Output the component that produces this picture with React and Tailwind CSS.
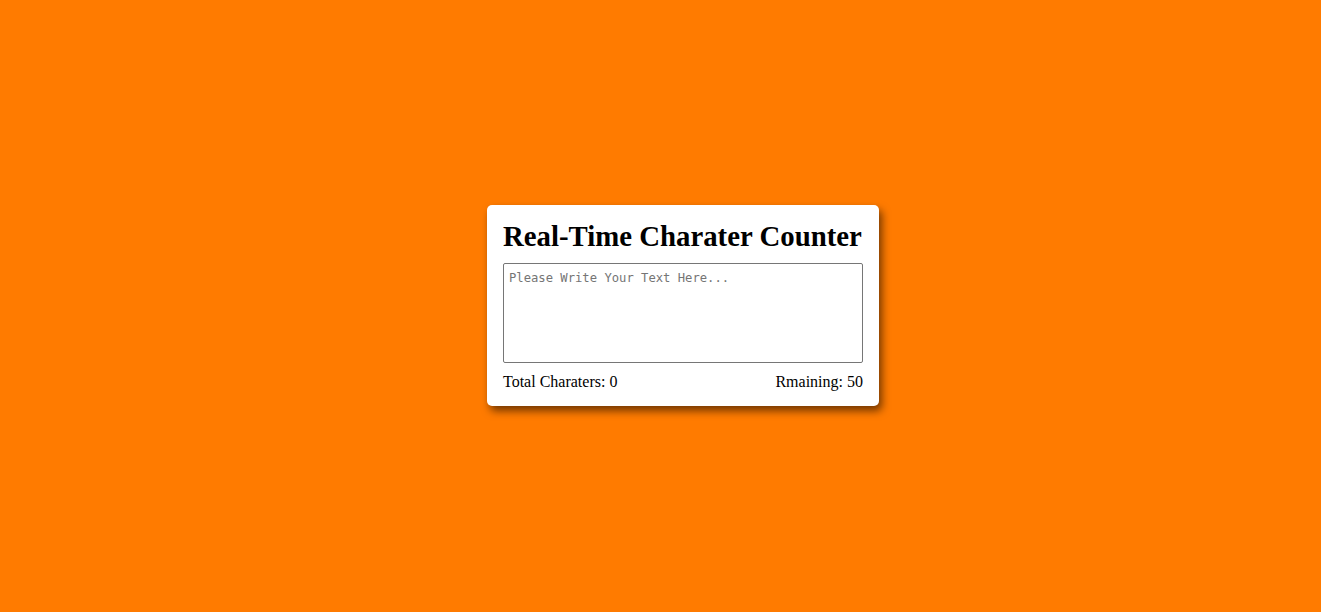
import { useState } from 'react';

const MAX = 50;

export default function App() {
  const [text, setText] = useState('');

  return (
    <div className="min-h-screen w-full bg-[#ff7b00] flex items-center justify-center pl-[45px]">
      <div className="w-[392px] mb-[2px] bg-white rounded-[5px] px-4 pt-[15px] pb-[15px] shadow-[3px_5px_8px_rgba(0,0,0,0.55)] font-['Liberation_Serif',serif] text-black">
        <h1 className="text-[28.8px] leading-[33px] font-bold mb-[10px] whitespace-nowrap">Real-Time Charater Counter</h1>
        <textarea
          value={text}
          maxLength={MAX}
          onChange={(e) => setText(e.target.value)}
          placeholder="Please Write Your Text Here..."
          className="block w-[360px] h-[100px] border border-[#767676] rounded-[2px] px-[5px] pt-[6px] pb-[4px] text-[12.2px] leading-[16px] font-['DejaVu_Sans_Mono',monospace] placeholder:text-[#757575] resize-none outline-none"
        />
        <div className="flex justify-between mt-[10px] text-[16px] leading-[18px]">
          <span>Total Charaters: {text.length}</span>
          <span>Rmaining: {MAX - text.length}</span>
        </div>
      </div>
    </div>
  );
}
